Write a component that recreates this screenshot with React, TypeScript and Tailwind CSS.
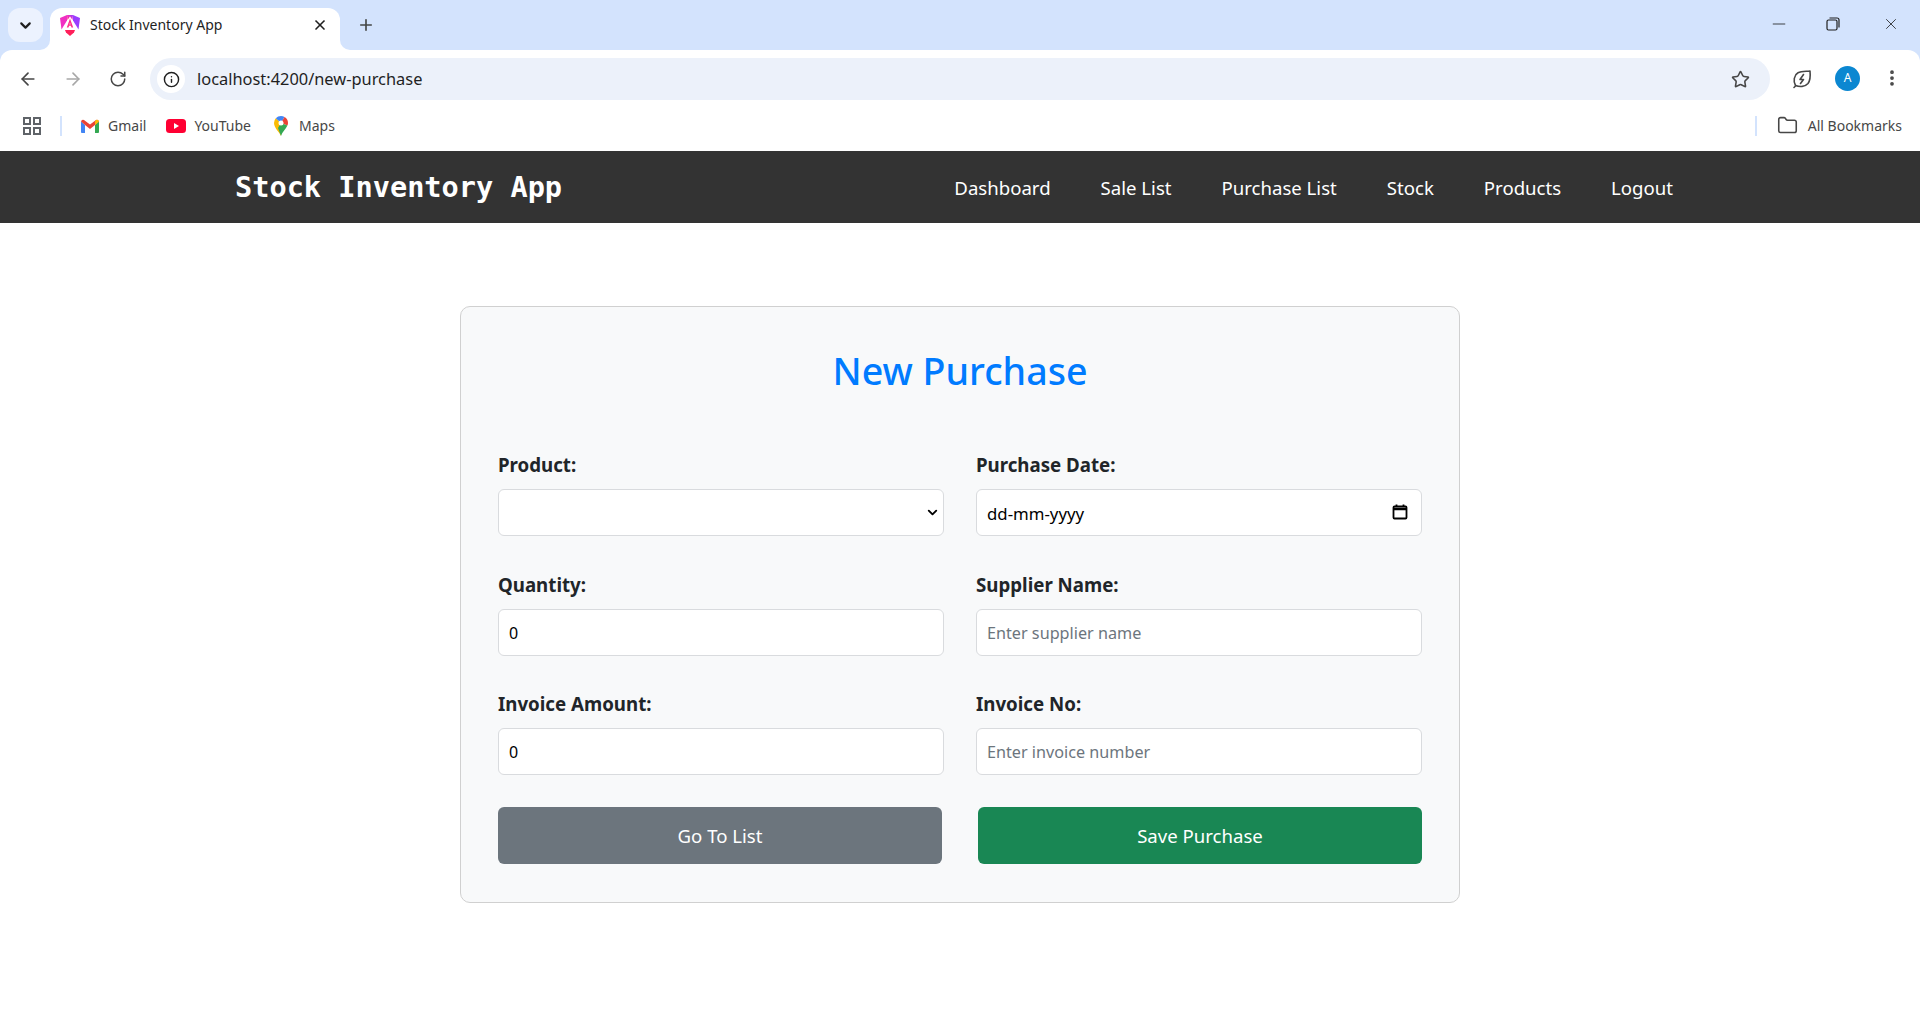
import { ArrowLeft, ArrowRight, ChevronDown, EllipsisVertical, Folder, Info, Minus, Plus, RotateCw, Star, X } from "lucide-react";

const sans = "font-['Noto_Sans','Open_Sans',sans-serif]";

function AngularLogo() {
  return (
    <svg width="20" height="21" viewBox="0 0 20 21">
      <defs>
        <linearGradient id="ng" x1="0" y1="1" x2="1" y2="0">
          <stop offset="0" stopColor="#ff1f5a" />
          <stop offset="0.5" stopColor="#f02fc2" />
          <stop offset="1" stopColor="#8b3dff" />
        </linearGradient>
      </defs>
      <path d="M7 0 0 3l1.500 11.500L7 5.500Z" fill="#f02fc2" />
      <path d="M13 0l7 3-1.500 11.500L13 5.500Z" fill="#9a3dff" />
      <path d="M10 0h3l-.5 5L10 1.500 7.500 5 7 0Z" fill="url(#ng)" />
      <path d="M10 3.500 6.800 12.500h1.700l.6-1.700h1.800l.6 1.700h1.700ZM9.500 9.500 10 7.500l.5 2Z" fill="#ff2f8a" />
      <path d="M5 15h10l-1 2.500L10 21l-4-3.500Z" fill="#ff1f5a" />
    </svg>
  );
}

function GmailIcon() {
  return (
    <svg width="18" height="14" viewBox="0 0 18 14">
      <path d="M0 2.500V12.500A1.200 1.200 0 0 0 1.200 14H4V6Z" fill="#4285f4" />
      <path d="M14 6v8h2.800a1.200 1.200 0 0 0 1.200-1.500V2.500Z" fill="#34a853" />
      <path d="M0 2.500 4 6l5 4 5-4 4-3.500A2 2 0 0 0 15 1L9 5.500 3 1A2 2 0 0 0 0 2.500Z" fill="#ea4335" />
      <path d="M14 2.500V6l4-3.500A2 2 0 0 0 15 1Z" fill="#fbbc04" />
    </svg>
  );
}

function YoutubeIcon() {
  return (
    <svg width="20" height="14" viewBox="0 0 20 14">
      <rect width="20" height="14" rx="3.500" fill="#ff0033" />
      <path d="M8 4v6l5-3Z" fill="#fff" />
    </svg>
  );
}

function MapsIcon() {
  return (
    <svg width="14" height="20" viewBox="0 0 14 20">
      <path d="M7 20C5.500 16 0 12 0 7a7 7 0 0 1 1.800-4.700L7 7Z" fill="#fbbc04" />
      <path d="M1.800 2.300A7 7 0 0 1 7 0a7 7 0 0 1 3.500 1L7 7Z" fill="#4285f4" />
      <path d="M10.500 1A7 7 0 0 1 14 7c0 1-.2 1.800-.6 2.600L7 7Z" fill="#ea4335" />
      <path d="M13.400 9.600C12 13 8.200 16 7 20L4 12l3-5Z" fill="#34a853" />
      <circle cx="7" cy="7" r="2.500" fill="#fff" />
    </svg>
  );
}

function LeafIcon() {
  return (
    <svg width="20" height="20" viewBox="0 0 20 20" fill="none" stroke="#474747" strokeWidth="1.600" strokeLinejoin="round" strokeLinecap="round">
      <path d="M3.500 16.500C1 12 2 6 6 3.800 9.500 2 14 2.500 18 2c.5 5 .3 9.500-2 12.500-3 3.500-8.500 3.500-12.500 2Z" />
      <path d="M2 18.500 4 16.500" />
      <path d="M11.500 5.500 8 10.500h3.500L8.500 14.500" />
    </svg>
  );
}

function BrowserChrome() {
  return (
    <div className={`${sans} bg-[#d3e3fd]`}>
      <div className="flex h-[50px] items-start">
        <div className="ml-2 mt-2 flex h-[34px] w-[35px] items-center justify-center rounded-xl bg-[#ecf2fe]">
          <ChevronDown size={17} strokeWidth={3} className="text-[#1f1f1f]" />
        </div>
        <div className="relative ml-[7px] mt-2 flex h-[42px] w-[290px] items-start rounded-t-xl bg-white pl-[10px] pr-[12px] pt-[7px]">
          {/* flared feet of the active tab */}
          <div className="absolute bottom-0 -left-[10px] h-[10px] w-[10px] bg-white">
            <div className="h-full w-full rounded-br-[10px] bg-[#d3e3fd]" />
          </div>
          <div className="absolute bottom-0 -right-[10px] h-[10px] w-[10px] bg-white">
            <div className="h-full w-full rounded-bl-[10px] bg-[#d3e3fd]" />
          </div>
          <AngularLogo />
          <span className="ml-[10px] flex-1 text-[14px] leading-[20px] text-[#1f1f1f]">Stock Inventory App</span>
          <X size={16} strokeWidth={2.500} className="mt-[2px] text-[#1f1f1f]" />
        </div>
        <Plus size={18} strokeWidth={2.200} className="ml-[17px] mt-4 text-[#444746]" />
        <div className="ml-auto flex items-center pt-[14px] text-[#1f1f1f]">
          <Minus size={20} strokeWidth={1} className="mr-[37px]" />
          <svg width="14" height="14" viewBox="0 0 14 14" fill="none" stroke="currentColor" strokeWidth="1.200" className="mr-[42px]">
            <rect x="1" y="3" width="10" height="10" rx="1.500" />
            <path d="M3.500 1h7.500A2 2 0 0 1 13 3v7.500" />
          </svg>
          <X size={18} strokeWidth={1.100} className="mr-[20px]" />
        </div>
      </div>
      <div className="flex h-[50px] items-center rounded-t-xl bg-white pt-2 text-[#474747]">
        <ArrowLeft size={20} strokeWidth={2} className="ml-[18px]" />
        <ArrowRight size={20} strokeWidth={2} className="ml-[25px] text-[#a8a8a8]" />
        <RotateCw size={18} strokeWidth={2} className="ml-[26px]" />
        <div className="ml-[23px] flex h-[42px] w-[1620px] items-center rounded-full bg-[#ecf1fa] pl-[7px] pr-[20px]">
          <div className="flex h-[28px] w-[28px] items-center justify-center rounded-full bg-white">
            <Info size={17} strokeWidth={2} className="text-[#1f1f1f]" />
          </div>
          <span className="ml-[12px] flex-1 text-[16.400px] text-[#1f1f1f]">localhost:4200/new-purchase</span>
          <Star size={19} strokeWidth={2} />
        </div>
        <div className="ml-[22px]">
          <LeafIcon />
        </div>
        <div className="ml-[23px] mb-[2px] flex h-[25px] w-[25px] items-center justify-center rounded-full bg-[#0b87d1] text-[12px] text-white">A</div>
        <EllipsisVertical size={20} strokeWidth={2.500} className="ml-[22px] mb-[2px]" />
      </div>
      <div className="flex h-[51px] items-center bg-white text-[14px] text-[#474747]">
        <svg width="20" height="20" viewBox="0 0 20 20" fill="none" stroke="#5f6368" strokeWidth="2" className="ml-[22px]">
          <rect x="2" y="2" width="6" height="6" />
          <rect x="12" y="2" width="6" height="6" />
          <rect x="2" y="12" width="6" height="6" />
          <rect x="12" y="12" width="6" height="6" />
        </svg>
        <div className="ml-[18px] h-[20px] w-[2px] bg-[#d3e3fd]" />
        <div className="ml-[19px] flex items-center gap-[9px]">
          <GmailIcon />
          <span>Gmail</span>
        </div>
        <div className="ml-5 flex items-center gap-2">
          <YoutubeIcon />
          <span>YouTube</span>
        </div>
        <div className="ml-[23px] flex items-center gap-[11px]">
          <MapsIcon />
          <span>Maps</span>
        </div>
        <div className="ml-auto h-[20px] w-[2px] bg-[#d3e3fd]" />
        <Folder size={21} strokeWidth={1.800} className="ml-[20px]" />
        <span className="ml-[10px] mr-[18px]">All Bookmarks</span>
      </div>
    </div>
  );
}

const navItems = ["Dashboard", "Sale List", "Purchase List", "Stock", "Products", "Logout"];

function Navbar() {
  return (
    <nav className="flex h-[72px] items-center bg-[#333333] pl-[235px] pr-[247px] text-white">
      <span className="font-['DejaVu_Sans_Mono',monospace] text-[28.600px] font-bold">Stock Inventory App</span>
      <div className={`${sans} ml-auto flex gap-[50px] pt-[1px] text-[18.600px]`}>
        {navItems.map((item) => (
          <a key={item}>{item}</a>
        ))}
      </div>
    </nav>
  );
}

const inputClass =
  "block h-[47px] w-full rounded-[6px] border border-[#d9dbde] bg-white px-[10px] pt-[1px] text-black outline-none placeholder:text-[#6c757d]";

function Field({ label, children }: { label: string; children: React.ReactNode }) {
  return (
    <div>
      <label className="mb-3 block text-[18.700px] leading-[24px] font-bold text-[#212529]">{label}</label>
      {children}
    </div>
  );
}

function NewPurchaseForm() {
  return (
    <form className={`${sans} mx-auto mt-[83px] w-[1000px] rounded-[10px] border border-[#d0d0d0] bg-[#f8f9fa] px-[37px] pt-[37px] pb-[38px]`}>
      <h2 className="mb-[55px] text-center text-[37.600px] leading-[54px] font-medium text-[#007bff]">New Purchase</h2>
      <div className="grid grid-cols-2 gap-x-8 gap-y-[36.500px]">
        <Field label="Product:">
          <div className="relative">
            <select className={`${inputClass} appearance-none text-[16px]`} defaultValue="">
              <option value="" />
            </select>
            <ChevronDown size={15} strokeWidth={3} className="absolute top-[16px] right-[4px] text-black" />
          </div>
        </Field>
        <Field label="Purchase Date:">
          <div className="relative">
            <input className={`${inputClass} text-[16.800px]`} defaultValue="dd-mm-yyyy" />
            <svg width="16" height="16" viewBox="0 0 16 16" fill="none" stroke="#000" strokeWidth="1.800" className="absolute top-[15px] right-[14px]">
              <rect x="1.500" y="2.500" width="13" height="12" rx="1" />
              <path d="M1.500 5h13" strokeWidth="2.500" />
              <path d="M4.500 0.500v2M11.500 0.500v2" />
            </svg>
          </div>
        </Field>
        <Field label="Quantity:">
          <input className={`${inputClass} text-[16px]`} defaultValue="0" />
        </Field>
        <Field label="Supplier Name:">
          <input className={`${inputClass} text-[16.200px]`} placeholder="Enter supplier name" />
        </Field>
        <Field label="Invoice Amount:">
          <input className={`${inputClass} text-[16px]`} defaultValue="0" />
        </Field>
        <Field label="Invoice No:">
          <input className={`${inputClass} text-[16.200px]`} placeholder="Enter invoice number" />
        </Field>
      </div>
      <div className="mt-8 flex justify-between">
        <button type="button" className="h-[57px] w-[444px] rounded-[6px] bg-[#6c757d] text-[18.600px] text-white">
          Go To List
        </button>
        <button type="submit" className="h-[57px] w-[444px] rounded-[6px] bg-[#198754] text-[18.600px] text-white">
          Save Purchase
        </button>
      </div>
    </form>
  );
}

export default function App() {
  return (
    <div className="min-h-[1018px] bg-white">
      <BrowserChrome />
      <Navbar />
      <NewPurchaseForm />
    </div>
  );
}
